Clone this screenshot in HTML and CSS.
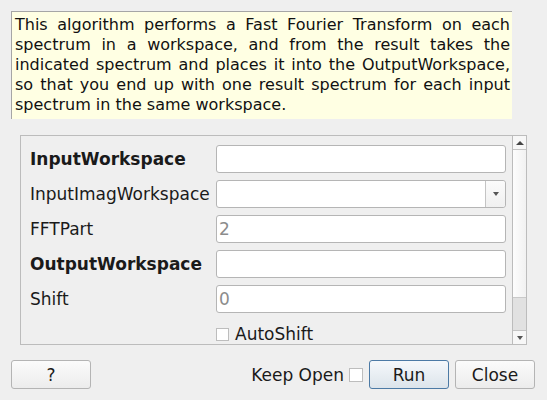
FILE: index.html
```html
<!DOCTYPE html>
<html>
<head>
<meta charset="utf-8">
<link rel="stylesheet" href="styles.css">
</head>
<body>
<div class="dialog">
  <div class="desc">This algorithm performs a Fast Fourier Transform on each spectrum in a workspace, and from the result takes the indicated spectrum and places it into the OutputWorkspace, so that you end up with one result spectrum for each input spectrum in the same workspace.</div>
  <div class="panel">
    <div class="content">
      <div class="grid">
        <div class="label bold">InputWorkspace</div>
        <div class="field"></div>
        <div class="label">InputImagWorkspace</div>
        <div class="field combo"><div class="combo-text"></div><div class="combo-btn"><span class="tri-down"></span></div></div>
        <div class="label">FFTPart</div>
        <div class="field"><span class="ph">2</span></div>
        <div class="label bold">OutputWorkspace</div>
        <div class="field"></div>
        <div class="label">Shift</div>
        <div class="field"><span class="ph">0</span></div>
        <div class="label"></div>
        <div class="check-row"><span class="box"></span><span class="check-text">AutoShift</span></div>
      </div>
    </div>
    <div class="scrollbar">
      <div class="sb-btn"><span class="tri-up"></span></div>
      <div class="sb-handle"></div>
      <div class="sb-track"></div>
      <div class="sb-btn sb-btn-bottom"><span class="tri-down small"></span></div>
    </div>
  </div>
  <div class="buttons">
    <div class="btn">?</div>
    <div class="spacer"></div>
    <span class="keep">Keep Open</span>
    <span class="box keep-box"></span>
    <div class="btn run">Run</div>
    <div class="btn close">Close</div>
  </div>
</div>
</body>
</html>
```
FILE: styles.css
```css
html, body {
  margin: 0;
  padding: 0;
  background: #efefef;
  font-family: "DejaVu Sans", sans-serif;
  color: #1a1a1a;
}
.dialog {
  width: 547px;
  height: 400px;
  box-sizing: border-box;
  padding: 11px 12px 0 11px;
  display: flex;
  flex-direction: column;
}
.desc {
  width: 501px;
  height: 108px;
  box-sizing: border-box;
  border-top: 1px solid #a6a6a6;
  border-left: 1px solid #a6a6a6;
  background: #ffffe3;
  padding: 3px 2px 0 3px;
  font-size: 16px;
  line-height: 20px;
  text-align: justify;
  color: #111;
  overflow: hidden;
}
.panel {
  margin: 16px 9px 0 9px;
  height: 210px;
  box-sizing: border-box;
  border: 1px solid #bcbcbc;
  display: flex;
  width: 507px;
}
.content {
  flex: 1;
  overflow: hidden;
  padding: 9px 0 0 9px;
}
.grid {
  display: grid;
  grid-template-columns: 186px 290px;
  grid-auto-rows: 28px;
  row-gap: 7px;
  align-items: center;
}
.label {
  font-size: 17px;
  color: #1a1a1a;
  white-space: nowrap;
}
.bold { font-weight: bold; }
.field {
  height: 28px;
  box-sizing: border-box;
  border: 1px solid #b5b5b5;
  border-radius: 3px;
  background: #fff;
  display: flex;
  align-items: center;
  padding-left: 2px;
  font-size: 17px;
}
.ph { color: #8c8c8c; }
.combo {
  padding-left: 0;
}
.combo-text { flex: 1; }
.combo-btn {
  width: 19px;
  height: 100%;
  border-left: 1px solid #c4c4c4;
  background: linear-gradient(#fbfbfb, #f0f0f0);
  border-radius: 0 3px 3px 0;
  display: flex;
  align-items: center;
  justify-content: center;
}
.tri-down {
  width: 0;
  height: 0;
  border-left: 3.5px solid transparent;
  border-right: 3.5px solid transparent;
  border-top: 4px solid #555;
}
.tri-up {
  width: 0;
  height: 0;
  border-left: 4px solid transparent;
  border-right: 4px solid transparent;
  border-bottom: 4px solid #444;
}
.check-row {
  display: flex;
  align-items: center;
  font-size: 17px;
}
.box {
  width: 13px;
  height: 13px;
  box-sizing: border-box;
  border: 1px solid #bdbdbd;
  background: #fff;
  display: inline-block;
}
.check-text { margin-left: 6px; }
.scrollbar {
  width: 14px;
  box-sizing: border-box;
  border-left: 1px solid #bcbcbc;
  display: flex;
  flex-direction: column;
}
.sb-btn {
  height: 14px;
  box-sizing: border-box;
  border-bottom: 1px solid #c4c4c4;
  background: #f7f7f7;
  display: flex;
  align-items: center;
  justify-content: center;
}
.sb-btn-bottom {
  border-bottom: none;
  border-top: 1px solid #c4c4c4;
}
.sb-handle {
  height: 147px;
  background: linear-gradient(90deg, #fdfdfd, #f1f1f1);
}
.sb-track {
  flex: 1;
  background: #e1e1e1;
  border-top: 1px solid #c9c9c9;
}
.buttons {
  margin-top: 15px;
  display: flex;
  align-items: center;
  height: 29px;
  width: 524px;
}
.btn {
  width: 80px;
  height: 29px;
  box-sizing: border-box;
  border: 1px solid #b4b4b4;
  border-radius: 3px;
  background: linear-gradient(#fbfbfb, #ececec);
  display: flex;
  align-items: center;
  justify-content: center;
  font-size: 17px;
  color: #1a1a1a;
}
.spacer { flex: 1; }
.keep {
  font-size: 17px;
  margin-right: 5px;
}
.keep-box {
  width: 14px;
  height: 14px;
  margin-right: 6px;
}
.run {
  border-color: #4c7aa5;
  background: linear-gradient(#f5f8fb, #dce4eb);
}
.close { margin-left: 6px; }
```
